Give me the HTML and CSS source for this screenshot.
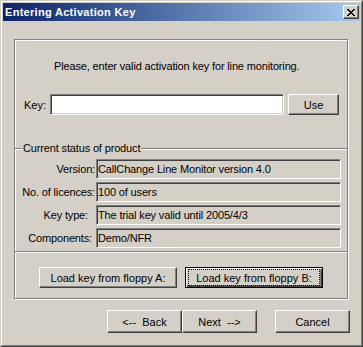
FILE: index.html
```html
<!DOCTYPE html>
<html>
<head>
<meta charset="UTF-8">
<link rel="stylesheet" href="styles.css">
</head>
<body>
<div class="window">
 <div class="frame">
  <div class="titlebar">
   <span class="title">Entering Activation Key</span>
   <span class="close">
    <svg width="8" height="7" viewBox="0 0 8 7" shape-rendering="crispEdges">
     <rect x="0" y="0" width="2" height="1"/><rect x="6" y="0" width="2" height="1"/>
     <rect x="1" y="1" width="2" height="1"/><rect x="5" y="1" width="2" height="1"/>
     <rect x="2" y="2" width="4" height="1"/>
     <rect x="3" y="3" width="2" height="1"/>
     <rect x="2" y="4" width="4" height="1"/>
     <rect x="1" y="5" width="2" height="1"/><rect x="5" y="5" width="2" height="1"/>
     <rect x="0" y="6" width="2" height="1"/><rect x="6" y="6" width="2" height="1"/>
    </svg>
   </span>
  </div>

  <div class="client">
   <div class="group">
    <p class="intro">Please, enter valid activation key for line monitoring.</p>

    <div class="key-row">
     <label class="key-label" for="key">Key:</label>
     <input type="text" id="key" class="edit">
     <button class="btn btn-use">Use</button>
    </div>

    <div class="status-head">
     <span class="etch etch-short"></span>
     <span class="caption">Current status of product</span>
     <span class="etch etch-long"></span>
    </div>

    <div class="fields">
     <span class="lbl lbl-version">Version:</span><span class="field">CallChange Line Monitor version 4.0</span>
     <span class="lbl">No. of licences:</span><span class="field">100 of users</span>
     <span class="lbl lbl-keytype">Key type:</span><span class="field">The trial key valid until 2005/4/3</span>
     <span class="lbl lbl-comp">Components:</span><span class="field">Demo/NFR</span>
    </div>

    <div class="etch etch-bottom"></div>

    <div class="load-row">
     <button class="btn btn-load">Load key from floppy A:</button>
     <button class="btn btn-load btn-default"><span class="focus">Load key from floppy B:</span></button>
    </div>
   </div>

   <div class="nav-row">
    <button class="btn btn-nav">&lt;--&nbsp; Back</button>
    <button class="btn btn-nav">Next&nbsp; --&gt;</button>
    <button class="btn btn-nav btn-cancel">Cancel</button>
   </div>
  </div>
 </div>
</div>
</body>
</html>
```

FILE: styles.css
```css
* {
  box-sizing: border-box;
}

body {
  margin: 0;
  background: #d4d0c8;
  color: #000;
  font-family: "Liberation Sans", Arial, sans-serif;
  font-size: 11px;
}

.window {
  width: 363px;
  height: 347px;
  border: 1px solid;
  border-color: #d4d0c8 #404040 #404040 #d4d0c8;
  background: #d4d0c8;
}

.frame {
  height: 100%;
  border: 1px solid;
  border-color: #fff #808080 #808080 #fff;
  padding: 1px;
}

/* caption bar */
.titlebar {
  height: 18px;
  display: flex;
  align-items: center;
  justify-content: space-between;
  padding: 0 1px 0 2px;
  background: linear-gradient(to right, #0a246a, #a6caf0);
  color: #fff;
  font-weight: bold;
  font-size: 11px;
  letter-spacing: 0.3px;
}

.close {
  width: 16px;
  height: 14px;
  display: flex;
  align-items: center;
  justify-content: center;
  background: #d4d0c8;
  border: 1px solid;
  border-color: #fff #404040 #404040 #fff;
  box-shadow: inset -1px -1px #808080;
}

.client {
  padding: 18px 0 0 11px;
}

/* etched group box */
.group {
  width: 334px;
  height: 260px;
  border: 1px solid #808080;
  box-shadow: inset 1px 1px #fff, 1px 1px #fff;
}

.intro {
  margin: 20px 0 0 39px;
  line-height: 13px;
  letter-spacing: -0.15px;
}

.key-row {
  display: flex;
  align-items: center;
  margin-top: 21px;
  padding-left: 9px;
  height: 21px;
}

.key-label {
  width: 26px;
}

.edit {
  width: 234px;
  height: 21px;
  margin: 0;
  border: 1px solid;
  border-color: #808080 #fff #fff #808080;
  box-shadow: inset 1px 1px #404040, inset -1px -1px #d4d0c8;
  background: #fff;
  outline: none;
}

.btn {
  margin: 0;
  padding: 0;
  font: inherit;
  color: #000;
  background: #d4d0c8;
  border: 1px solid;
  border-color: #fff #404040 #404040 #fff;
  box-shadow: inset -1px -1px #808080;
  display: flex;
  align-items: center;
  justify-content: center;
}

.btn-use {
  width: 51px;
  height: 21px;
  margin-left: 4px;
}

/* status section */
.status-head {
  display: flex;
  height: 13px;
  margin-top: 27px;
  line-height: 13px;
}

.etch {
  height: 2px;
  border-top: 1px solid #808080;
  border-bottom: 1px solid #fff;
}

.status-head .etch {
  margin-top: 6px;
}

.etch-short {
  width: 7px;
}

.caption {
  padding: 0 1px;
  letter-spacing: -0.15px;
}

.etch-long {
  flex: 1;
}

.fields {
  display: grid;
  grid-template-columns: 81px 245px;
  grid-auto-rows: 20px;
  row-gap: 3px;
  margin-top: 4px;
}

.lbl {
  display: flex;
  align-items: center;
  justify-content: flex-end;
  padding-right: 1px;
  letter-spacing: -0.15px;
}

.lbl-keytype {
  padding-right: 8px;
}

.lbl-comp {
  padding-right: 4px;
}

.field {
  display: flex;
  align-items: center;
  padding-left: 1px;
  border: 1px solid;
  border-color: #808080 #fff #fff #808080;
  box-shadow: inset 1px 1px #404040;
  letter-spacing: -0.15px;
}

.etch-bottom {
  margin-top: 3px;
}

.load-row {
  display: flex;
  gap: 8px;
  margin: 14px 0 0 24px;
}

.btn-load {
  width: 138px;
  height: 21px;
}

.btn-default {
  border: 1px solid #000;
  box-shadow: inset 1px 1px #fff, inset -1px -1px #404040, inset -2px -2px #808080;
}

.focus {
  display: flex;
  align-items: center;
  justify-content: center;
  width: 130px;
  height: 15px;
  outline: 1px dotted #000;
}

.nav-row {
  display: flex;
  margin: 11px 0 0 93px;
}

.btn-nav {
  width: 75px;
  height: 23px;
}

.btn-cancel {
  margin-left: 18px;
}
```
